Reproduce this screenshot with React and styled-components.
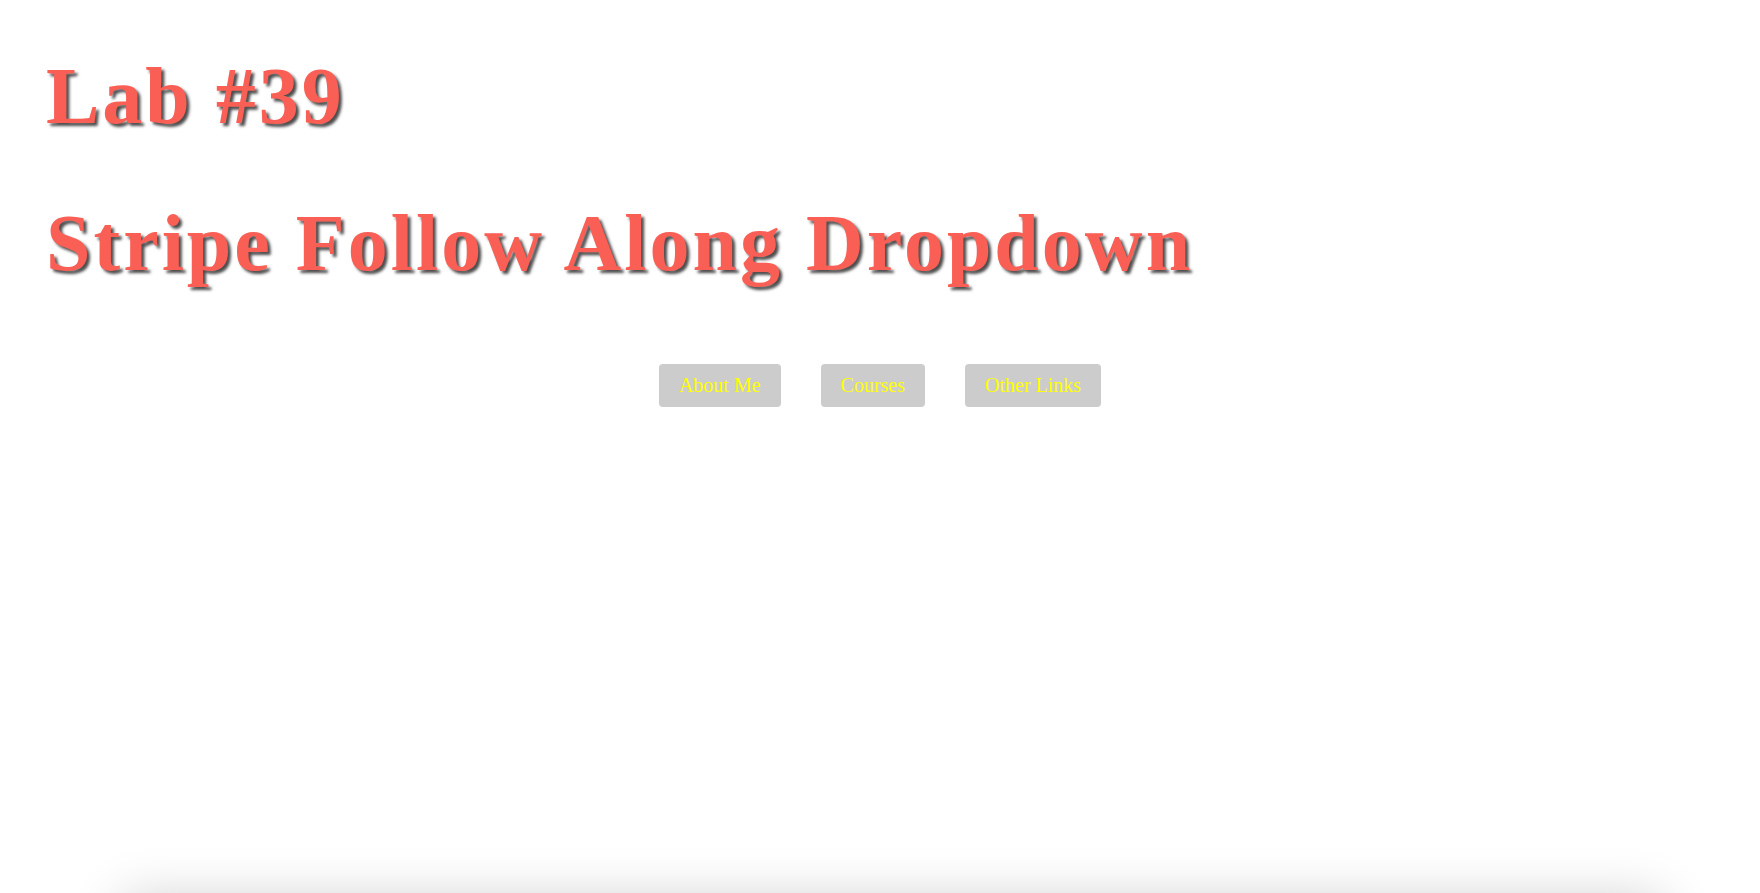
import React from "react"
import styled, { createGlobalStyle } from "styled-components"

const GlobalStyle = createGlobalStyle`
  html, body {
    margin: 0;
    background: #ffffff;
  }
  body {
    font-family: "Liberation Serif", "Times New Roman", serif;
  }
`

const Page = styled.div`
  padding: 50px 46px 0;
  display: flex;
  flex-direction: column;
`

const Title = styled.h1`
  margin: 0 0 55px;
  font-family: "Liberation Serif", "Times New Roman", serif;
  font-size: 80px;
  line-height: 92px;
  font-weight: 700;
  letter-spacing: 3px;
  color: #f95f55;
  text-shadow: 3px 3px 3px rgba(0, 0, 0, 0.7);
`

const Nav = styled.nav`
  margin-top: 20px;
  display: flex;
  justify-content: center;
`

const Menu = styled.ul`
  list-style: none;
  margin: 0;
  padding: 0;
  display: flex;
  gap: 40px;
`

const MenuButton = styled.a`
  display: block;
  padding: 10px 20px;
  font-size: 20px;
  line-height: 23px;
  color: #ffff00;
  background: #cccccc;
  border-radius: 4px;
  text-decoration: none;
  cursor: pointer;
`

const ContentCard = styled.div`
  align-self: center;
  width: 1540px;
  height: 300px;
  margin-top: 493px;
  margin-left: 24px;
  background: #ffffff;
  box-shadow: 0 0 50px rgba(0, 0, 0, 0.2);
`

const links = ["About Me", "Courses", "Other Links"]

export default function App() {
  return (
    <>
      <GlobalStyle />
      <Page>
        <Title>Lab #39</Title>
        <Title>Stripe Follow Along Dropdown</Title>
        <Nav>
          <Menu>
            {links.map((label) => (
              <li key={label}>
                <MenuButton>{label}</MenuButton>
              </li>
            ))}
          </Menu>
        </Nav>
        <ContentCard />
      </Page>
    </>
  )
}
